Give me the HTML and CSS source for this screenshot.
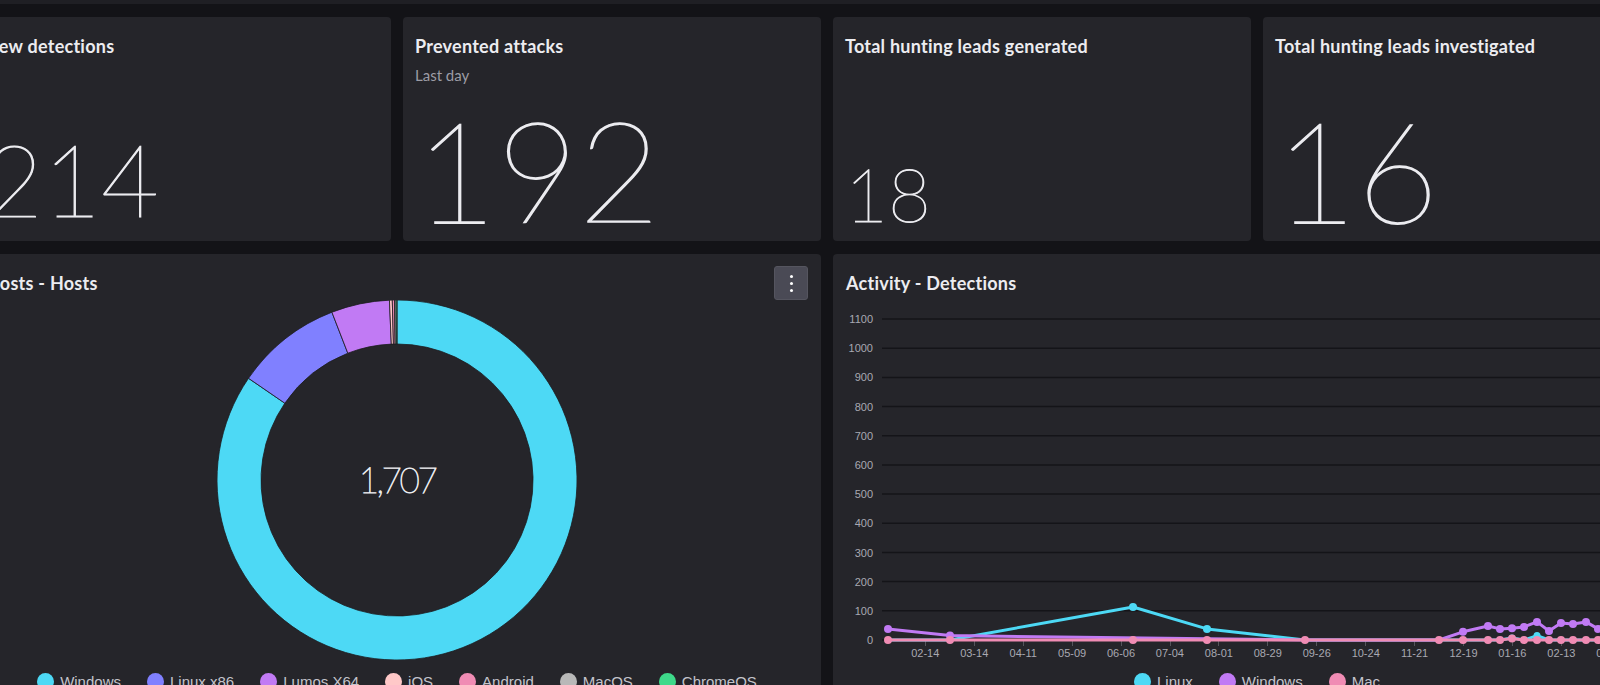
FILE: index.html
```html
<!DOCTYPE html>
<html lang="en">
<head>
<meta charset="utf-8">
<title>Dashboard</title>
<link rel="stylesheet" href="styles.css">
</head>
<body>
<div class="topstrip"></div>
<main class="grid">
  <section class="card stat">
    <h2 class="card-title">New detections</h2>
    <div class="stat-value size-m">214</div>
  </section>
  <section class="card stat">
    <h2 class="card-title">Prevented attacks</h2>
    <p class="card-sub">Last day</p>
    <div class="stat-value size-xl">192</div>
  </section>
  <section class="card stat">
    <h2 class="card-title">Total hunting leads generated</h2>
    <div class="stat-value size-s">18</div>
  </section>
  <section class="card stat">
    <h2 class="card-title">Total hunting leads investigated</h2>
    <div class="stat-value size-xl">16</div>
  </section>

  <section class="card wide">
    <header class="card-head">
      <h2 class="card-title">Hosts - Hosts</h2>
      <button class="kebab" aria-label="More"><span></span><span></span><span></span></button>
    </header>
    <svg class="donut" viewBox="0 0 360 360" width="360" height="360">
      <g stroke="#1c1c20" stroke-width="0.8">
        <path fill="#4dd9f5" d="M180,0 A180,180 0 1 1 31.5,78.3 L67.8,103.2 A136,136 0 1 0 180,44 Z"/>
        <path fill="#8080ff" d="M31.5,78.3 A180,180 0 0 1 114.9,12.2 L130.8,53.2 A136,136 0 0 0 67.8,103.2 Z"/>
        <path fill="#c17af4" d="M114.9,12.2 A180,180 0 0 1 172.46,0.16 L174.3,44.12 A136,136 0 0 0 130.8,53.2 Z"/>
        <path fill="#ffc8c8" d="M172.46,0.16 A180,180 0 0 1 175.29,0.06 L176.44,44.05 A136,136 0 0 0 174.3,44.12 Z"/>
        <path fill="#f08cb4" d="M175.29,0.06 A180,180 0 0 1 177.49,0.02 L178.1,44.01 A136,136 0 0 0 176.44,44.05 Z"/>
        <path fill="#b8b8b8" d="M177.49,0.02 A180,180 0 0 1 179.06,0 L179.29,44 A136,136 0 0 0 178.1,44.01 Z"/>
        <path fill="#3ed98a" d="M179.06,0 A180,180 0 0 1 180,0 L180,44 A136,136 0 0 0 179.29,44 Z"/>
      </g>
      <text class="donut-total" x="180" y="193" text-anchor="middle">1,707</text>
    </svg>
    <ul class="legend">
      <li><i class="dot c-win"></i>Windows</li>
      <li><i class="dot c-linux86"></i>Linux x86</li>
      <li><i class="dot c-lumos"></i>Lumos X64</li>
      <li><i class="dot c-ios"></i>iOS</li>
      <li><i class="dot c-android"></i>Android</li>
      <li><i class="dot c-mac"></i>MacOS</li>
      <li><i class="dot c-chrome"></i>ChromeOS</li>
    </ul>
  </section>

  <section class="card wide">
    <header class="card-head">
      <h2 class="card-title">Activity - Detections</h2>
    </header>
    <svg class="chart" viewBox="0 0 848 368" width="848" height="368">
      <g class="grid-lines" stroke="#141418" stroke-width="1.5">
        <line x1="49" x2="848" y1="19" y2="19"/>
        <line x1="49" x2="848" y1="48.2" y2="48.2"/>
        <line x1="49" x2="848" y1="77.4" y2="77.4"/>
        <line x1="49" x2="848" y1="106.5" y2="106.5"/>
        <line x1="49" x2="848" y1="135.7" y2="135.7"/>
        <line x1="49" x2="848" y1="164.9" y2="164.9"/>
        <line x1="49" x2="848" y1="194.1" y2="194.1"/>
        <line x1="49" x2="848" y1="223.3" y2="223.3"/>
        <line x1="49" x2="848" y1="252.5" y2="252.5"/>
        <line x1="49" x2="848" y1="281.6" y2="281.6"/>
        <line x1="49" x2="848" y1="310.8" y2="310.8"/>
        <line x1="49" x2="848" y1="340" y2="340"/>
      </g>
      <g class="ticks" stroke="#55555c" stroke-width="1">
        <line x1="92.5" x2="92.5" y1="340" y2="346"/>
        <line x1="141.5" x2="141.5" y1="340" y2="346"/>
        <line x1="190.5" x2="190.5" y1="340" y2="346"/>
        <line x1="239.5" x2="239.5" y1="340" y2="346"/>
        <line x1="288.5" x2="288.5" y1="340" y2="346"/>
        <line x1="337.5" x2="337.5" y1="340" y2="346"/>
        <line x1="385.5" x2="385.5" y1="340" y2="346"/>
        <line x1="434.5" x2="434.5" y1="340" y2="346"/>
        <line x1="483.5" x2="483.5" y1="340" y2="346"/>
        <line x1="532.5" x2="532.5" y1="340" y2="346"/>
        <line x1="581.5" x2="581.5" y1="340" y2="346"/>
        <line x1="630.5" x2="630.5" y1="340" y2="346"/>
        <line x1="679.5" x2="679.5" y1="340" y2="346"/>
        <line x1="728.5" x2="728.5" y1="340" y2="346"/>
        <line x1="777.5" x2="777.5" y1="340" y2="346"/>
        <line x1="826.5" x2="826.5" y1="340" y2="346"/>
      </g>
      <g class="axis-y" text-anchor="end">
        <text x="40" y="23">1100</text>
        <text x="40" y="52.2">1000</text>
        <text x="40" y="81.4">900</text>
        <text x="40" y="110.5">800</text>
        <text x="40" y="139.7">700</text>
        <text x="40" y="168.9">600</text>
        <text x="40" y="198.1">500</text>
        <text x="40" y="227.3">400</text>
        <text x="40" y="256.5">300</text>
        <text x="40" y="285.6">200</text>
        <text x="40" y="314.8">100</text>
        <text x="40" y="344">0</text>
      </g>
      <g class="axis-x" text-anchor="middle">
        <text x="92.3" y="357">02-14</text>
        <text x="141.2" y="357">03-14</text>
        <text x="190.2" y="357">04-11</text>
        <text x="239.1" y="357">05-09</text>
        <text x="288" y="357">06-06</text>
        <text x="336.9" y="357">07-04</text>
        <text x="385.9" y="357">08-01</text>
        <text x="434.8" y="357">08-29</text>
        <text x="483.7" y="357">09-26</text>
        <text x="532.7" y="357">10-24</text>
        <text x="581.6" y="357">11-21</text>
        <text x="630.5" y="357">12-19</text>
        <text x="679.4" y="357">01-16</text>
        <text x="728.4" y="357">02-13</text>
        <text x="777.3" y="357">03-13</text>
        <text x="826.2" y="357">04-10</text>
      </g>

      <g class="series" fill="none" stroke-width="3" stroke-linejoin="round">
        <polyline stroke="#4dd9f5" points="55,340 117,340 300,307 374,328.9 472,340 606,340 630,340 655,340 667,340 679,338 691,340 704,335.6 716,340 728,340 740,340 753,340 765,340 777,340 789,340 802,340 814,340 826,340 838,340"/>
        <polyline stroke="#c17af4" points="55,328.9 117,335.6 472,340 606,340 630,331.8 655,326 667,328.9 679,328.3 691,326.9 704,321.9 716,331 728,323.1 740,324 753,321.9 765,328.9 777,325.4 789,326.9 802,323.1 814,326 826,328.3 838,324"/>
        <polyline stroke="#f08cb4" points="55,340 117,340 300,340 374,340 472,340 606,340 630,340 655,340 667,340 679,338.5 691,340 704,340 716,340 728,340 740,340 753,340 765,340 777,340 789,340 802,340 814,340 826,340 838,340"/>
      </g>
      <g class="pts-linux" fill="#4dd9f5">
        <circle cx="300" cy="307" r="4"/><circle cx="374" cy="328.9" r="4"/>
        <circle cx="679" cy="338" r="3.5"/><circle cx="704" cy="335.6" r="3.5"/>
      </g>
      <g class="pts-win" fill="#c17af4">
        <circle cx="55" cy="328.9" r="4"/><circle cx="117" cy="335.6" r="4"/>
        <circle cx="630" cy="331.8" r="4"/><circle cx="655" cy="326" r="4"/>
        <circle cx="667" cy="328.9" r="4"/><circle cx="679" cy="328.3" r="4"/>
        <circle cx="691" cy="326.9" r="4"/><circle cx="704" cy="321.9" r="4"/>
        <circle cx="716" cy="331" r="4"/><circle cx="728" cy="323.1" r="4"/>
        <circle cx="740" cy="324" r="4"/><circle cx="753" cy="321.9" r="4"/>
        <circle cx="765" cy="328.9" r="4"/><circle cx="777" cy="325.4" r="4"/>
        <circle cx="789" cy="326.9" r="4"/>
      </g>
      <g class="pts-mac" fill="#f08cb4">
        <circle cx="55" cy="340" r="4"/><circle cx="117" cy="340" r="4"/>
        <circle cx="300" cy="340" r="4"/><circle cx="374" cy="340" r="4"/>
        <circle cx="472" cy="340" r="4"/><circle cx="606" cy="340" r="4"/>
        <circle cx="630" cy="340" r="4"/><circle cx="655" cy="340" r="4"/>
        <circle cx="667" cy="340" r="4"/><circle cx="679" cy="338.5" r="4"/>
        <circle cx="691" cy="340" r="4"/><circle cx="704" cy="340" r="4"/>
        <circle cx="716" cy="340" r="4"/><circle cx="728" cy="340" r="4"/>
        <circle cx="740" cy="340" r="4"/><circle cx="753" cy="340" r="4"/>
        <circle cx="765" cy="340" r="4"/><circle cx="777" cy="340" r="4"/>
        <circle cx="789" cy="340" r="4"/>
      </g>
    </svg>
    <ul class="legend">
      <li><i class="dot c-win"></i>Linux</li>
      <li><i class="dot c-lumos"></i>Windows</li>
      <li><i class="dot c-android"></i>Mac</li>
    </ul>
  </section>
</main>
</body>
</html>
```

FILE: styles.css
```css
html, body {
  margin: 0;
  height: 100%;
  overflow: hidden;
  background: #131317;
}

body {
  font-family: Lato, "Noto Sans", sans-serif;
  color: #e9e9ee;
}

.topstrip {
  height: 4px;
  background: #1f1f24;
}

.grid {
  display: grid;
  grid-template-columns: repeat(4, 418px);
  grid-template-rows: 224px 460px;
  gap: 13px 12px;
  margin: 13px 0 0 -27px;
  width: max-content;
}

.card {
  background: #25252a;
  border-radius: 4px;
  overflow: hidden;
  display: flex;
  flex-direction: column;
}

.stat {
  padding: 17px 12px 0 12px;
}

.card-title {
  margin: 0;
  font-size: 18px;
  line-height: 24px;
  font-weight: 700;
  letter-spacing: 0.25px;
  color: #ececf0;
  white-space: nowrap;
}

.card-sub {
  margin: 7px 0 0;
  font-size: 15px;
  line-height: 20px;
  color: #9c9ca5;
}

.stat-value {
  margin-top: auto;
  font-weight: 200;
  line-height: 1;
  color: #ececf0;
  -webkit-text-stroke: 1.4px #ececf0;
}

.size-xl { font-size: 141px; margin-bottom: 2px; }
.size-m  { font-size: 100px; margin-bottom: 13px; -webkit-text-stroke-width: 1.1px; }
.size-s  { font-size: 74px;  margin-bottom: 10px; -webkit-text-stroke-width: 0.9px; }

.wide {
  grid-column: span 2;
}

.card-head {
  display: flex;
  justify-content: space-between;
  align-items: flex-start;
  height: 34px;
  padding: 12px 13px 0 13px;
}

.card-head .card-title {
  margin-top: 5px;
}

.kebab {
  box-sizing: border-box;
  width: 34px;
  height: 34px;
  padding: 0;
  background: #4a4a55;
  border: 1px solid #55555f;
  border-radius: 3px;
  display: flex;
  flex-direction: column;
  align-items: center;
  justify-content: center;
  gap: 4px;
}

.kebab span {
  width: 3px;
  height: 3px;
  border-radius: 50%;
  background: #ffffff;
}

.donut {
  display: block;
  margin: 0 auto;
}

.donut-total {
  font-family: Lato, sans-serif;
  font-weight: 200;
  font-size: 35px;
  letter-spacing: -2.4px;
  fill: #ececf0;
  stroke: #ececf0;
  stroke-width: 0.9px;
}

.legend {
  display: flex;
  justify-content: center;
  gap: 26px;
  list-style: none;
  margin: 13px 0 0;
  padding: 0;
  font-family: "Liberation Sans", Arial, sans-serif;
  font-size: 15px;
  line-height: 17px;
  color: #c4c4cc;
}

.chart + .legend {
  margin-top: 5px;
}

.legend li {
  display: flex;
  align-items: center;
  gap: 6px;
}

.dot {
  display: block;
  width: 17px;
  height: 17px;
  border-radius: 50%;
}

.c-win { background: #4dd9f5; }
.c-linux86 { background: #8080ff; }
.c-lumos { background: #c17af4; }
.c-ios { background: #ffc8c8; }
.c-android { background: #f08cb4; }
.c-mac { background: #b8b8b8; }
.c-chrome { background: #3ed98a; }

.chart {
  display: block;
}

.axis-y text, .axis-x text {
  font-family: "Liberation Sans", Arial, sans-serif;
  font-size: 11px;
  fill: #a9a9b2;
}
```
